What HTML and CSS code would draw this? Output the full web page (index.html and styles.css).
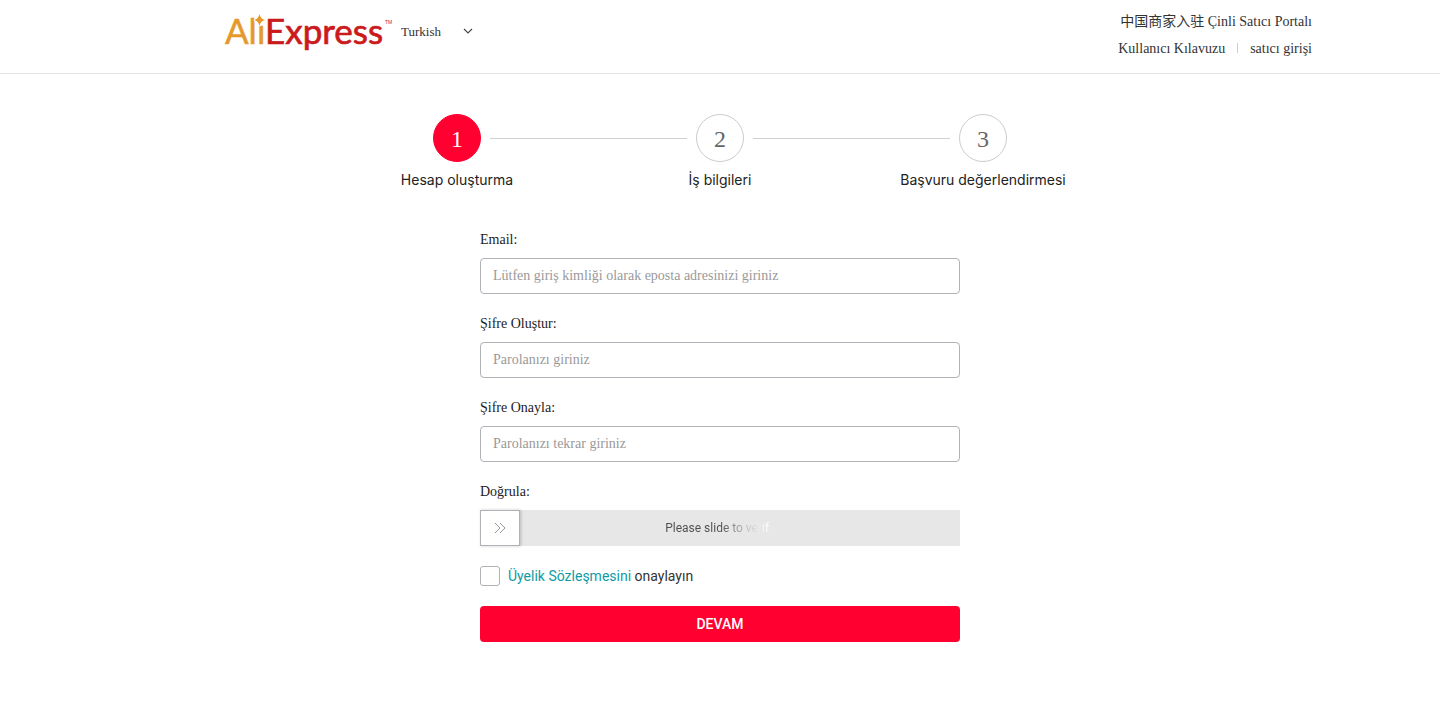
FILE: index.html
```html
<!DOCTYPE html>
<html lang="tr">
<head>
    <meta charset="UTF-8">
    <meta name="viewport" content="width=device-width, initial-scale=1.0">
    <title>AliExpress</title>
    <link rel="stylesheet" href="styles.css">
</head>
<body>
    <header class="header">
        <div class="header-inner">
            <div class="brand">
                <svg class="logo" width="168" height="44" viewBox="0 0 168 44" role="img" aria-label="AliExpress">
                    <text class="logo-text" x="0" y="35"><tspan class="logo-gold">Ali</tspan><tspan class="logo-red">Express</tspan></text>
                    <path d="M34.500 5Q35.500 10 40 11Q35.500 12 34.500 17Q33.500 12 29 11Q33.500 10 34.500 5Z" fill="#e6982a" stroke="#fff" stroke-width="2" paint-order="stroke"/>
                    <text class="logo-tm" x="160" y="15">TM</text>
                </svg>
                <div class="language">
                    <select id="language" aria-label="Language">
                        <option>Turkish</option>
                    </select>
                    <svg class="language-arrow" width="10" height="6" viewBox="0 0 10 6"><path d="M1 1l4 4 4-4" fill="none" stroke="#444" stroke-width="1.100"/></svg>
                </div>
            </div>
            <nav class="links">
                <div><a href="#">中国商家入驻 Çinli Satıcı Portalı</a></div>
                <div><a href="#">Kullanıcı Kılavuzu</a><span class="divider"></span><a href="#">satıcı girişi</a></div>
            </nav>
        </div>
    </header>

    <main>
        <ol class="steps">
            <li class="step active">
                <div class="step-row"><span class="step-number">1</span></div>
                <div class="step-title">Hesap oluşturma</div>
            </li>
            <li class="step">
                <div class="step-row"><span class="step-number">2</span></div>
                <div class="step-title">İş bilgileri</div>
            </li>
            <li class="step">
                <div class="step-row"><span class="step-number">3</span></div>
                <div class="step-title">Başvuru değerlendirmesi</div>
            </li>
        </ol>

        <form class="form">
            <div class="field">
                <label for="email">Email:</label>
                <input type="text" id="email" placeholder="Lütfen giriş kimliği olarak eposta adresinizi giriniz">
            </div>
            <div class="field">
                <label for="password">Şifre Oluştur:</label>
                <input type="password" id="password" placeholder="Parolanızı giriniz">
            </div>
            <div class="field">
                <label for="confirm">Şifre Onayla:</label>
                <input type="password" id="confirm" placeholder="Parolanızı tekrar giriniz">
            </div>
            <div class="field">
                <label for="verify">Doğrula:</label>
                <div class="slider">
                    <input type="range" id="verify" min="0" max="100" value="0">
                    <svg class="slider-arrow" width="12" height="12" viewBox="0 0 12 12"><path d="M1 1l5 5-5 5M6 1l5 5-5 5" fill="none" stroke="#999" stroke-width="1"/></svg>
                    <span class="slider-text">Please slide to verify</span>
                </div>
            </div>
            <div class="agree">
                <input type="checkbox" id="agree">
                <label for="agree"><a href="#">Üyelik Sözleşmesini</a> onaylayın</label>
            </div>
            <button type="submit">DEVAM</button>
        </form>
    </main>
</body>
</html>
```
FILE: styles.css
```css
* {
    box-sizing: border-box;
}
body {
    margin: 0;
    font-family: "Liberation Serif", "Noto Sans CJK SC", serif;
    font-size: 14px;
    line-height: 20px;
    color: #333;
    background-color: #fff;
}
a {
    color: inherit;
    text-decoration: none;
}

/* Header */
.header {
    border-bottom: 1px solid #e5e5e5;
}
.header-inner {
    display: flex;
    justify-content: space-between;
    max-width: 1200px;
    margin: 0 auto;
    padding: 9px 8px 14px 105px;
}
.brand {
    display: flex;
    align-items: center;
    gap: 8px;
    height: 44px;
}
.logo {
    overflow: visible;
}
.logo-text {
    font-family: Lato, sans-serif;
    font-size: 35px;
}
.logo-gold {
    fill: #e6982a;
    stroke: #e6982a;
    stroke-width: 0.5px;
}
.logo-red {
    fill: #cb1a1c;
    stroke: #cb1a1c;
    stroke-width: 0.7px;
}
.logo-tm {
    font-family: "Liberation Sans", sans-serif;
    font-size: 5px;
    fill: #cb1a1c;
}
.language {
    display: flex;
    align-items: center;
    position: relative;
}
.language select {
    width: 72px;
    padding: 0;
    border: none;
    background: none;
    appearance: none;
    font-family: inherit;
    font-size: 13px;
    color: #333;
}
.language-arrow {
    position: absolute;
    right: 0;
    pointer-events: none;
}
.links {
    display: flex;
    flex-direction: column;
    gap: 7px;
    padding-top: 3px;
    text-align: right;
    white-space: nowrap;
}
.links div {
    height: 20px;
}
.divider {
    display: inline-block;
    width: 1px;
    height: 10px;
    margin: 0 12px;
    background-color: #ccc;
}

/* Steps */
.steps {
    display: flex;
    max-width: 789px;
    margin: 40px auto;
    padding: 0;
    list-style: none;
}
.step {
    flex: 1;
    text-align: center;
}
.step-row {
    display: flex;
    align-items: center;
    gap: 9px;
}
.step-row::before,
.step-row::after {
    content: "";
    flex: 1;
    height: 1px;
    background-color: #d0d0d0;
}
.step:first-child .step-row::before,
.step:last-child .step-row::after {
    visibility: hidden;
}
.step-number {
    width: 48px;
    height: 48px;
    border: 1px solid #ccc;
    border-radius: 50%;
    font-size: 24px;
    line-height: 48px;
    color: #666;
}
.active .step-number {
    border-color: #ff0030;
    background-color: #ff0030;
    color: #fff;
}
.step-title {
    margin-top: 8px;
    font-family: Inter, sans-serif;
    color: #222;
}

/* Form */
.form {
    max-width: 480px;
    margin: 0 auto 40px;
}
.field {
    margin-bottom: 20px;
}
.field label {
    display: block;
    margin-bottom: 8px;
    color: #222;
}
.field input[type="text"],
.field input[type="password"] {
    display: block;
    width: 100%;
    height: 36px;
    padding: 0 12px;
    border: 1px solid #b0b2b7;
    border-radius: 4px;
    font-family: inherit;
    font-size: 14px;
}
.field input::placeholder {
    color: #999;
}
.slider {
    display: flex;
    align-items: center;
    justify-content: center;
    position: relative;
    height: 36px;
    background-color: #e7e7e7;
}
.slider input {
    position: absolute;
    inset: 0;
    width: 100%;
    height: 36px;
    margin: 0;
    background: none;
    appearance: none;
}
.slider input::-webkit-slider-thumb {
    width: 40px;
    height: 36px;
    border: 1px solid #b0b2b7;
    background-color: #fff;
    box-shadow: 1px 0 3px rgba(0, 0, 0, 0.2);
    appearance: none;
}
.slider-arrow {
    position: absolute;
    left: 14px;
    pointer-events: none;
}
.slider-text {
    position: relative;
    font-family: Roboto, sans-serif;
    font-size: 12px;
    background: linear-gradient(to right, #4d4d4d 50%, #999 65%, #e7e7e7 85%, #fff 93%, #e7e7e7 96%);
    background-clip: text;
    -webkit-background-clip: text;
    color: transparent;
    pointer-events: none;
}
.agree {
    display: flex;
    align-items: center;
    gap: 8px;
    margin-bottom: 20px;
    font-family: Roboto, sans-serif;
}
.agree input {
    width: 20px;
    height: 20px;
    margin: 0;
    border: 1px solid #b0b2b7;
    border-radius: 3px;
    appearance: none;
}
.agree input:checked {
    background-color: #ff0030;
}
.agree a {
    color: #0f9ba5;
}
button {
    display: block;
    width: 100%;
    height: 36px;
    border: none;
    border-radius: 4px;
    background-color: #ff0030;
    font-family: Roboto, sans-serif;
    font-size: 14px;
    font-weight: 500;
    color: #fff;
    cursor: pointer;
}
```
